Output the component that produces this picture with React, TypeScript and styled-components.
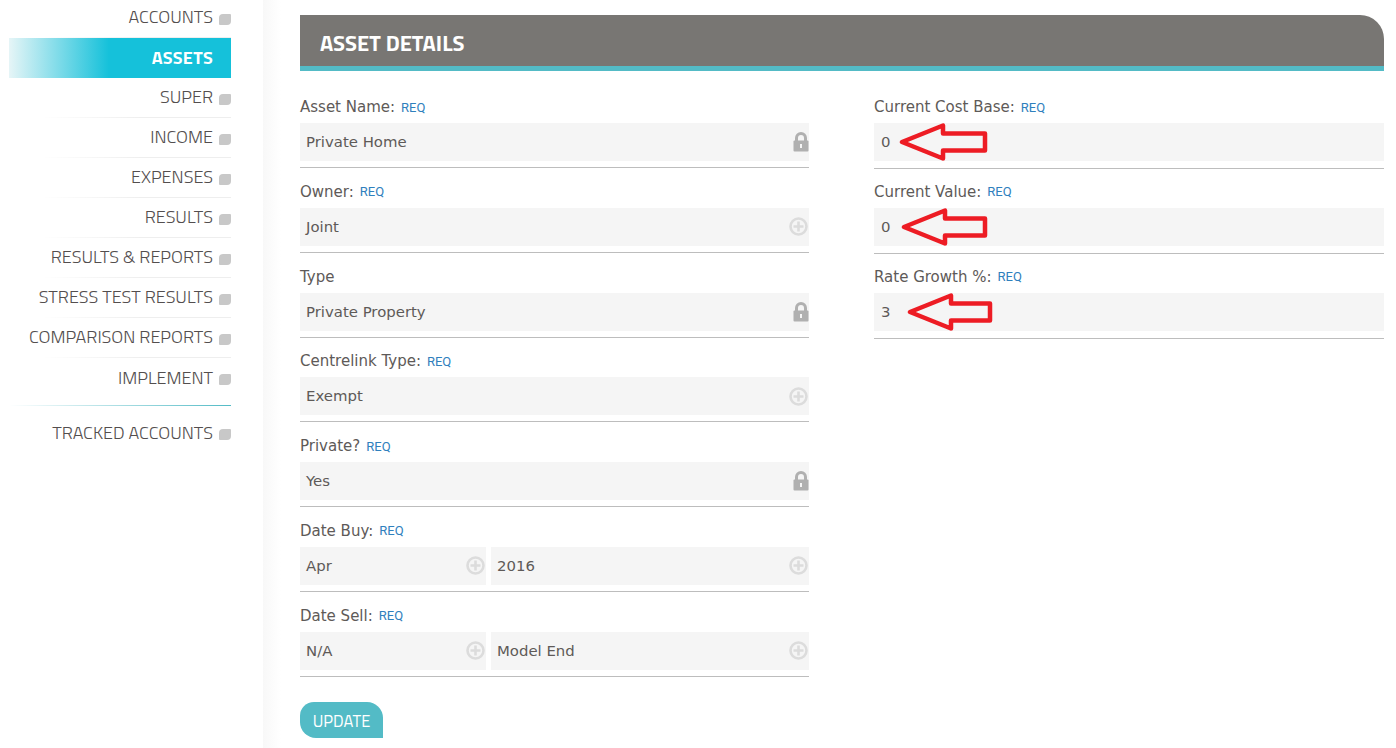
import React from "react";
import styled, { createGlobalStyle } from "styled-components";

const Global = createGlobalStyle`
  html, body { margin: 0; padding: 0; background: #fff; height: 748px; overflow: hidden; }
`;

const Page = styled.div`
  display: flex;
  width: 1396px;
  height: 748px;
  overflow: hidden;
`;

const Sidebar = styled.nav`
  width: 263px;
  flex: none;
  box-sizing: border-box;
  padding: 0 32px 0 9px;
  margin-top: -2px;
  font-family: "Titillium Web", "Roboto", "Liberation Sans", sans-serif;
`;

const NavRow = styled.div<{ $active?: boolean; $line?: boolean }>`
  height: 40px;
  box-sizing: border-box;
  padding-bottom: 2px;
  display: flex;
  align-items: center;
  justify-content: flex-end;
  gap: 6px;
  font-size: 18px;
  font-weight: ${p => (p.$active ? 700 : 300)};
  letter-spacing: ${p => (p.$active ? "0.3px" : "0")};
  color: ${p => (p.$active ? "#fff" : "#534e4e")};
  background: ${p => (p.$active ? "linear-gradient(90deg, #e6f5f7 0%, #15c1da 45%, #15c1da 100%)" : "transparent")};
  ${p => (p.$line ? "border-bottom: 1px solid transparent; border-image: linear-gradient(90deg, #fff 15%, #eee 60%) 1;" : "")}
`;

const Square = styled.span<{ $hidden?: boolean }>`
  width: 12px;
  height: 11px;
  margin-top: 5px;
  background: #c8c8c8;
  border-radius: 4px 1px 4px 1px;
  visibility: ${p => (p.$hidden ? "hidden" : "visible")};
`;

const NavDivider = styled.div`
  height: 1px;
  background: linear-gradient(90deg, #fff 0%, #53bbc6 100%);
  margin: 7px 0 7px;
`;

const Main = styled.main`
  flex: 1;
  position: relative;
  box-sizing: border-box;
  padding: 15px 12px 0 37px;
  background: linear-gradient(90deg, #f8f8f8 0, #fff 18px);
`;

const Header = styled.header`
  height: 46px;
  padding: 5px 0 0 20px;
  box-sizing: content-box;
  background: #787673;
  border-bottom: 5px solid #53bbc6;
  border-top-right-radius: 24px;
  display: flex;
  align-items: center;
  margin-bottom: 26px;
  font-family: "Titillium Web", "Roboto", "Liberation Sans", sans-serif;
  font-size: 22px;
  font-weight: 700;
  color: #fff;
`;

const Columns = styled.div`
  display: grid;
  grid-template-columns: 509px 510px;
  column-gap: 65px;
  align-items: start;
`;

const Column = styled.div`
  display: flex;
  flex-direction: column;
`;

const Field = styled.div`
  height: 84.8px;
  box-sizing: border-box;
  font-family: "DejaVu Sans", Verdana, sans-serif;
`;

const Label = styled.div`
  height: 20px;
  margin-bottom: 6px;
  display: flex;
  align-items: center;
  gap: 6px;
  font-size: 15px;
  color: #5e5a58;
`;

const Req = styled.span`
  font-family: "Roboto", "Liberation Sans", sans-serif;
  font-size: 13px;
  color: #2f80bd;
`;

const Inputs = styled.div<{ $gap: number }>`
  display: flex;
  gap: 5px;
  padding-bottom: ${p => p.$gap}px;
  border-bottom: 1px solid #bdbdbd;
`;

const Input = styled.div<{ $width?: number; $inset: number }>`
  flex: ${p => (p.$width ? `0 0 ${p.$width}px` : "1")};
  height: 38px;
  box-sizing: border-box;
  padding-left: ${p => p.$inset}px;
  display: flex;
  align-items: center;
  justify-content: space-between;
  background: #f5f5f5;
  font-size: 14.9px;
  color: #5e5a58;
`;

const Update = styled.button`
  width: 83px;
  height: 36px;
  margin-top: 11px;
  padding: 2px 0 0;
  border: 0;
  border-radius: 14px 16px 0 16px;
  background: #53bbc6;
  color: #fff;
  font-family: "Titillium Web", "Roboto", "Liberation Sans", sans-serif;
  font-size: 16.5px;
  font-weight: 400;
`;

const ArrowMark = styled.svg<{ $x: number; $y: number }>`
  position: absolute;
  left: ${p => p.$x}px;
  top: ${p => p.$y}px;
`;

const LockSvg = styled.svg`
  flex: none;
`;

const PlusSvg = styled.svg`
  flex: none;
  margin-right: 1px;
`;

const Lock = () => (
  <LockSvg width="16" height="20" viewBox="0 0 16 20">
    <path d="M3.5 9V6a4.5 4.5 0 0 1 9 0v3" fill="none" stroke="#b0b0b0" strokeWidth="3" />
    <rect x="0.5" y="8.5" width="15" height="11" rx="1" fill="#b0b0b0" />
    <rect x="7" y="12" width="2" height="4" fill="#f5f5f5" />
  </LockSvg>
);

const Plus = () => (
  <PlusSvg width="19" height="19" viewBox="0 0 19 19">
    <circle cx="9.5" cy="9.5" r="8" fill="none" stroke="#dcdcdc" strokeWidth="2.6" />
    <path d="M9.5 4.5v10M4.5 9.5h10" stroke="#dcdcdc" strokeWidth="2.6" />
  </PlusSvg>
);

const Arrow = ({ x, y, w = 85 }: { x: number; y: number; w?: number }) => (
  <ArrowMark $x={x} $y={y} width={w + 6} height="38" viewBox={`0 0 ${w + 6} 38`}>
    <path
      d={`M3 19 L44 2.5 L44 10.5 L${w} 10.5 L${w} 27.5 L44 27.5 L44 35.5 Z`}
      fill="none"
      stroke="#ed1c24"
      strokeWidth="4.5"
      strokeLinejoin="round"
    />
  </ArrowMark>
);

const nav = ["ACCOUNTS", "ASSETS", "SUPER", "INCOME", "EXPENSES", "RESULTS", "RESULTS & REPORTS", "STRESS TEST RESULTS", "COMPARISON REPORTS", "IMPLEMENT"];

type F = { label: string; req?: boolean; values: { text: string; icon?: "lock" | "plus"; width?: number }[] };

const left: F[] = [
  { label: "Asset Name:", req: true, values: [{ text: "Private Home", icon: "lock" }] },
  { label: "Owner:", req: true, values: [{ text: "Joint", icon: "plus" }] },
  { label: "Type", values: [{ text: "Private Property", icon: "lock" }] },
  { label: "Centrelink Type:", req: true, values: [{ text: "Exempt", icon: "plus" }] },
  { label: "Private?", req: true, values: [{ text: "Yes", icon: "lock" }] },
  { label: "Date Buy:", req: true, values: [{ text: "Apr", icon: "plus", width: 186 }, { text: "2016", icon: "plus" }] },
  { label: "Date Sell:", req: true, values: [{ text: "N/A", icon: "plus", width: 186 }, { text: "Model End", icon: "plus" }] },
];

const right: F[] = [
  { label: "Current Cost Base:", req: true, values: [{ text: "0" }] },
  { label: "Current Value:", req: true, values: [{ text: "0" }] },
  { label: "Rate Growth %:", req: true, values: [{ text: "3" }] },
];

const FieldBlock = ({ f, gap, inset }: { f: F; gap: number; inset: number }) => (
  <Field>
    <Label>
      {f.label}
      {f.req && <Req>REQ</Req>}
    </Label>
    <Inputs $gap={gap}>
      {f.values.map(v => (
        <Input key={v.text} $width={v.width} $inset={inset}>
          {v.text}
          {v.icon === "lock" && <Lock />}
          {v.icon === "plus" && <Plus />}
        </Input>
      ))}
    </Inputs>
  </Field>
);

export default function App() {
  return (
    <Page>
      <Global />
      <Sidebar>
        {nav.map(n => (
          <NavRow key={n} $active={n === "ASSETS"} $line={n !== "ASSETS" && n !== "IMPLEMENT"}>
            {n}
            <Square $hidden={n === "ASSETS"} />
          </NavRow>
        ))}
        <NavDivider />
        <NavRow>
          TRACKED ACCOUNTS
          <Square />
        </NavRow>
      </Sidebar>
      <Main>
        <Header>ASSET DETAILS</Header>
        <Columns>
          <Column>
            {left.map(f => (
              <FieldBlock key={f.label} f={f} gap={6} inset={6} />
            ))}
            <Update>UPDATE</Update>
          </Column>
          <Column>
            {right.map(f => (
              <FieldBlock key={f.label} f={f} gap={7} inset={7} />
            ))}
          </Column>
        </Columns>
        <Arrow x={636} y={123} w={86} />
        <Arrow x={638} y={208} w={84} />
        <Arrow x={644} y={293} w={83} />
      </Main>
    </Page>
  );
}
